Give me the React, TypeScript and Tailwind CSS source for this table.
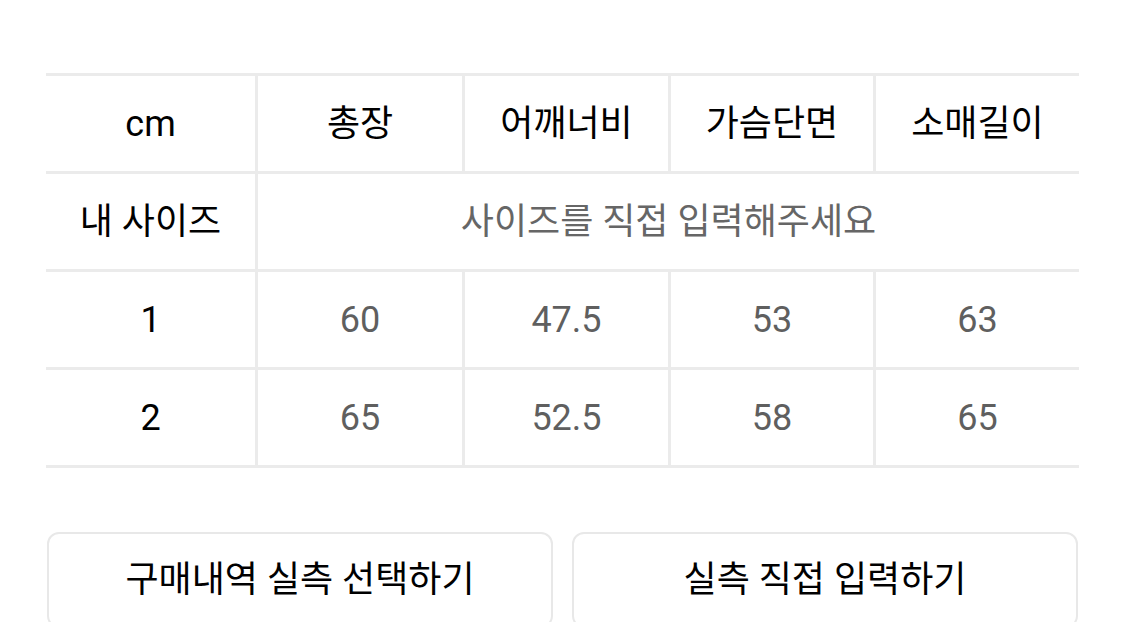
const cols = ['총장', '어깨너비', '가슴단면', '소매길이']

const rows = [
  { label: '1', values: ['60', '47.5', '53', '63'] },
  { label: '2', values: ['65', '52.5', '58', '65'] },
]

const cell = 'flex h-[98px] items-center justify-center border-b-[3px] border-[#ebebeb] text-[36px]'

export default function App() {
  return (
    <div className="h-[622px] w-[1125px] overflow-hidden bg-white font-['Roboto','Noto_Sans_CJK_KR',sans-serif]">
      <div className="px-[46px] pt-[73px]">
        <div className="grid grid-cols-[209px_207px_206px_205px_206px] border-t-[3px] border-[#ebebeb]">
          {/* header */}
          <div className={`${cell} text-black`}>cm</div>
          {cols.map((c) => (
            <div key={c} className={`${cell} border-l-[3px] text-black`}>
              {c}
            </div>
          ))}

          {/* my size */}
          <div className={`${cell} text-black`}>내 사이즈</div>
          <div className={`${cell} col-span-4 border-l-[3px] text-[#666]`}>
            사이즈를 직접 입력해주세요
          </div>

          {rows.map((r) => (
            <div key={r.label} className="contents">
              <div className={`${cell} text-black`}>{r.label}</div>
              {r.values.map((v, i) => (
                <div key={i} className={`${cell} border-l-[3px] text-[#5f5f5f]`}>
                  {v}
                </div>
              ))}
            </div>
          ))}
        </div>

        <div className="mt-[64px] flex gap-[19px] pl-[1px]">
          <button className="flex h-[96px] w-[506px] items-center justify-center rounded-[12px] border-2 border-[#e8e8e8] text-[36px] text-black">
            구매내역 실측 선택하기
          </button>
          <button className="flex h-[96px] w-[506px] items-center justify-center rounded-[12px] border-2 border-[#e8e8e8] text-[36px] text-black">
            실측 직접 입력하기
          </button>
        </div>
      </div>
    </div>
  )
}
